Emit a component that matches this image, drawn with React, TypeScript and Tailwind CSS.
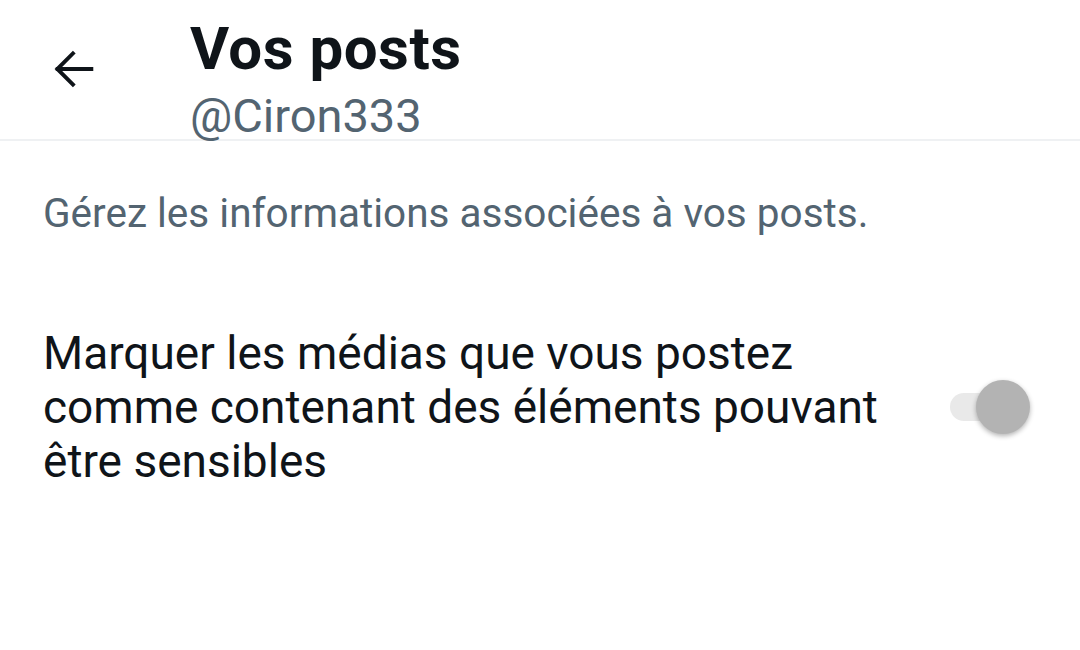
import React, { useState } from 'react';

export default function App() {
  const [sensitive, setSensitive] = useState(false);

  return (
    <div className="w-[1080px] h-[650px] bg-white overflow-hidden" style={{ fontFamily: 'Roboto, "Noto Sans", sans-serif' }}>
      {/* header */}
      <div className="flex items-start h-[141px] border-b-2 border-[#eff1f3]">
        <button className="w-[190px] pl-[48px] pt-[43px] text-[#0f1419]">
          <svg width="52" height="52" viewBox="0 0 24 24" fill="none" stroke="currentColor" strokeWidth="1.8" strokeLinecap="square">
            <path d="M20 12H4.5" />
            <path d="M11.5 4.8 4.3 12l7.2 7.2" />
          </svg>
        </button>
        <div className="flex flex-col pt-[14px]">
          <h1 className="text-[60px] leading-[70px] font-bold text-[#0f1419] tracking-[0.5px]">Vos posts</h1>
          <span className="mt-[4px] text-[47px] leading-[56px] text-[#536471]">@Ciron333</span>
        </div>
      </div>

      <p className="px-[43px] pt-[46px] text-[40.5px] leading-[52px] text-[#536471]">
        Gérez les informations associées à vos posts.
      </p>

      <div className="flex items-center justify-between pl-[43px] pr-[50px] pt-[87px]">
        <p className="w-[860px] shrink-0 text-[46px] leading-[54px] text-[#0f1419]">
          Marquer les médias que vous postez comme contenant des éléments pouvant être sensibles
        </p>
        <button
          onClick={() => setSensitive(!sensitive)}
          className="relative w-[84px] h-[56px] flex items-center"
        >
          <span className="ml-[4px] w-[56px] h-[28px] rounded-full bg-[#e9e9e9]" />
          <span className="absolute right-0 top-[1px] w-[54px] h-[54px] rounded-full bg-[#b3b3b3] shadow-[0_2px_5px_rgba(0,0,0,0.3)]" />
        </button>
      </div>
    </div>
  );
}
